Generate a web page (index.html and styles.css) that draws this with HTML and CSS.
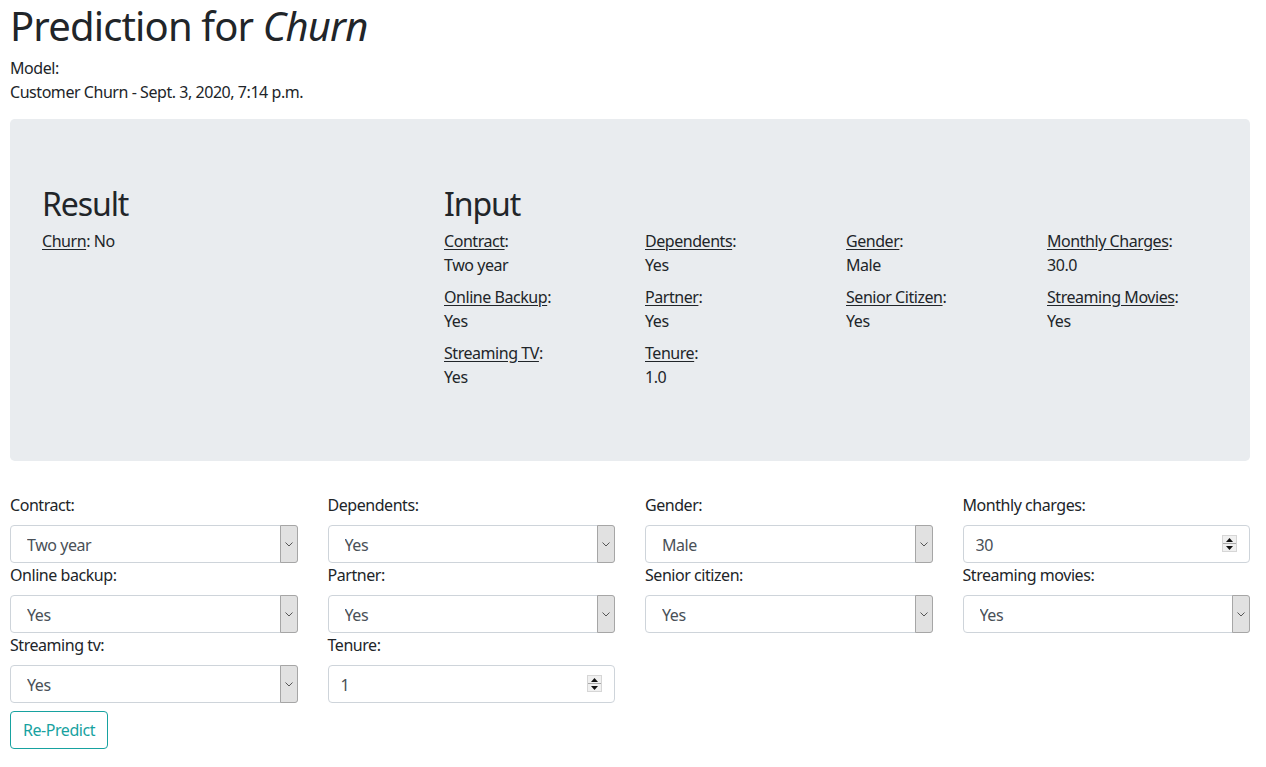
FILE: index.html
```html
<!DOCTYPE html>
<html lang="en">
<head>
<meta charset="utf-8">
<title>Prediction for Churn</title>
<link rel="stylesheet" href="styles.css">
</head>
<body>
<div class="page">
  <h1 class="title">Prediction for <em>Churn</em></h1>
  <p class="model">Model:<br>Customer Churn - Sept. 3, 2020, 7:14 p.m.</p>

  <div class="jumbotron">
    <div class="result-col">
      <h2 class="section-title">Result</h2>
      <p class="item"><span class="key">Churn</span>: No</p>
    </div>
    <div class="input-col">
      <h2 class="section-title">Input</h2>
      <div class="input-grid">
        <p class="item"><span class="key">Contract</span>:<br>Two year</p>
        <p class="item"><span class="key">Dependents</span>:<br>Yes</p>
        <p class="item"><span class="key">Gender</span>:<br>Male</p>
        <p class="item"><span class="key">Monthly Charges</span>:<br>30.0</p>
        <p class="item"><span class="key">Online Backup</span>:<br>Yes</p>
        <p class="item"><span class="key">Partner</span>:<br>Yes</p>
        <p class="item"><span class="key">Senior Citizen</span>:<br>Yes</p>
        <p class="item"><span class="key">Streaming Movies</span>:<br>Yes</p>
        <p class="item"><span class="key">Streaming TV</span>:<br>Yes</p>
        <p class="item"><span class="key">Tenure</span>:<br>1.0</p>
      </div>
    </div>
  </div>

  <form class="form-grid">
    <div class="form-group">
      <label>Contract:</label>
      <div class="select-wrap"><select class="control"><option>Two year</option></select><span class="arrow"><svg width="8" height="5" viewBox="0 0 8 5"><path d="M0.5 0.5 L4 4 L7.5 0.5" fill="none" stroke="#555" stroke-width="1"/></svg></span></div>
    </div>
    <div class="form-group">
      <label>Dependents:</label>
      <div class="select-wrap"><select class="control"><option>Yes</option></select><span class="arrow"><svg width="8" height="5" viewBox="0 0 8 5"><path d="M0.5 0.5 L4 4 L7.5 0.5" fill="none" stroke="#555" stroke-width="1"/></svg></span></div>
    </div>
    <div class="form-group">
      <label>Gender:</label>
      <div class="select-wrap"><select class="control"><option>Male</option></select><span class="arrow"><svg width="8" height="5" viewBox="0 0 8 5"><path d="M0.5 0.5 L4 4 L7.5 0.5" fill="none" stroke="#555" stroke-width="1"/></svg></span></div>
    </div>
    <div class="form-group">
      <label>Monthly charges:</label>
      <div class="select-wrap"><input class="control number" type="text" value="30"><span class="spinner"><span class="spin-btn"><svg width="7" height="4" viewBox="0 0 7 4"><path d="M0 4 L3.5 0 L7 4Z" fill="#111"/></svg></span><span class="spin-btn"><svg width="7" height="4" viewBox="0 0 7 4"><path d="M0 0 L3.5 4 L7 0Z" fill="#111"/></svg></span></span></div>
    </div>
    <div class="form-group">
      <label>Online backup:</label>
      <div class="select-wrap"><select class="control"><option>Yes</option></select><span class="arrow"><svg width="8" height="5" viewBox="0 0 8 5"><path d="M0.5 0.5 L4 4 L7.5 0.5" fill="none" stroke="#555" stroke-width="1"/></svg></span></div>
    </div>
    <div class="form-group">
      <label>Partner:</label>
      <div class="select-wrap"><select class="control"><option>Yes</option></select><span class="arrow"><svg width="8" height="5" viewBox="0 0 8 5"><path d="M0.5 0.5 L4 4 L7.5 0.5" fill="none" stroke="#555" stroke-width="1"/></svg></span></div>
    </div>
    <div class="form-group">
      <label>Senior citizen:</label>
      <div class="select-wrap"><select class="control"><option>Yes</option></select><span class="arrow"><svg width="8" height="5" viewBox="0 0 8 5"><path d="M0.5 0.5 L4 4 L7.5 0.5" fill="none" stroke="#555" stroke-width="1"/></svg></span></div>
    </div>
    <div class="form-group">
      <label>Streaming movies:</label>
      <div class="select-wrap"><select class="control"><option>Yes</option></select><span class="arrow"><svg width="8" height="5" viewBox="0 0 8 5"><path d="M0.5 0.5 L4 4 L7.5 0.5" fill="none" stroke="#555" stroke-width="1"/></svg></span></div>
    </div>
    <div class="form-group">
      <label>Streaming tv:</label>
      <div class="select-wrap"><select class="control"><option>Yes</option></select><span class="arrow"><svg width="8" height="5" viewBox="0 0 8 5"><path d="M0.5 0.5 L4 4 L7.5 0.5" fill="none" stroke="#555" stroke-width="1"/></svg></span></div>
    </div>
    <div class="form-group">
      <label>Tenure:</label>
      <div class="select-wrap"><input class="control number" type="text" value="1"><span class="spinner"><span class="spin-btn"><svg width="7" height="4" viewBox="0 0 7 4"><path d="M0 4 L3.5 0 L7 4Z" fill="#111"/></svg></span><span class="spin-btn"><svg width="7" height="4" viewBox="0 0 7 4"><path d="M0 0 L3.5 4 L7 0Z" fill="#111"/></svg></span></span></div>
    </div>
    <div class="button-row">
      <button type="button" class="btn-outline">Re-Predict</button>
    </div>
  </form>
</div>
</body>
</html>
```

FILE: styles.css
```css
* { box-sizing: border-box; }

html, body {
  margin: 0;
  background: #fff;
}

body {
  font-family: "Noto Sans", "Open Sans", sans-serif;
  font-size: 16px;
  line-height: 24px;
  letter-spacing: -0.45px;
  color: #212529;
}

.page {
  padding: 0 16px 0 10px;
}

.title {
  margin: 0 0 6px 0;
  padding-top: 2px;
  font-size: 40px;
  line-height: 48px;
  font-weight: 400;
  letter-spacing: -0.85px;
}

.title em {
  font-style: italic;
}

.model {
  margin: 0 0 15px 0;
}

.jumbotron {
  background: #e9ecef;
  border-radius: 4.8px;
  padding: 64px 32px;
  display: grid;
  grid-template-columns: 372px 1fr;
  column-gap: 30px;
  margin-bottom: 32px;
}

.section-title {
  margin: 0 0 6px 0;
  padding-top: 2px;
  font-size: 32px;
  line-height: 38px;
  font-weight: 400;
  letter-spacing: -1.1px;
}

.input-grid {
  display: grid;
  grid-template-columns: repeat(4, 1fr);
  column-gap: 30px;
}

.item {
  margin: 0 0 8px 0;
}

.key {
  text-decoration: underline;
  text-underline-offset: 2px;
}

.form-grid {
  display: grid;
  grid-template-columns: repeat(4, 1fr);
  column-gap: 30px;
}

.form-group label {
  display: block;
  margin-bottom: 8px;
  line-height: 24px;
  height: 24px;
}

.select-wrap {
  position: relative;
  height: 38px;
}

.control {
  display: block;
  width: 100%;
  height: 38px;
  margin: 0;
  padding: 7px 12px 5px 16px;
  font-family: inherit;
  font-size: 16px;
  line-height: 24px;
  letter-spacing: -0.45px;
  color: #495057;
  background: #fff;
  border: 1px solid #ced4da;
  border-radius: 4px;
  -webkit-appearance: none;
  appearance: none;
  outline: none;
}

.control.number {
  padding-left: 12px;
}

.arrow {
  position: absolute;
  top: 0;
  right: 0;
  width: 18px;
  height: 38px;
  background: #e1e1e1;
  border: 1px solid #a6a6a6;
  border-radius: 0 3px 3px 0;
  display: flex;
  align-items: center;
  justify-content: center;
}

.spinner {
  position: absolute;
  top: 10px;
  right: 13px;
  width: 15px;
  height: 17px;
  display: flex;
  flex-direction: column;
  background: #f0f0f0;
  border: 1px solid #d6d6d6;
}

.spin-btn {
  flex: 1;
  display: flex;
  align-items: center;
  justify-content: center;
}

.spin-btn + .spin-btn {
  border-top: 1px solid #a8a8a8;
}

.button-row {
  grid-column: 1 / -1;
  padding-top: 8px;
}

.btn-outline {
  font-family: inherit;
  font-size: 16px;
  line-height: 24px;
  letter-spacing: -0.45px;
  padding: 6px 0;
  color: #17a2a0;
  background: transparent;
  border: 1px solid #17a2a0;
  border-radius: 4px;
  width: 98px;
  height: 38px;
  white-space: nowrap;
}
```
